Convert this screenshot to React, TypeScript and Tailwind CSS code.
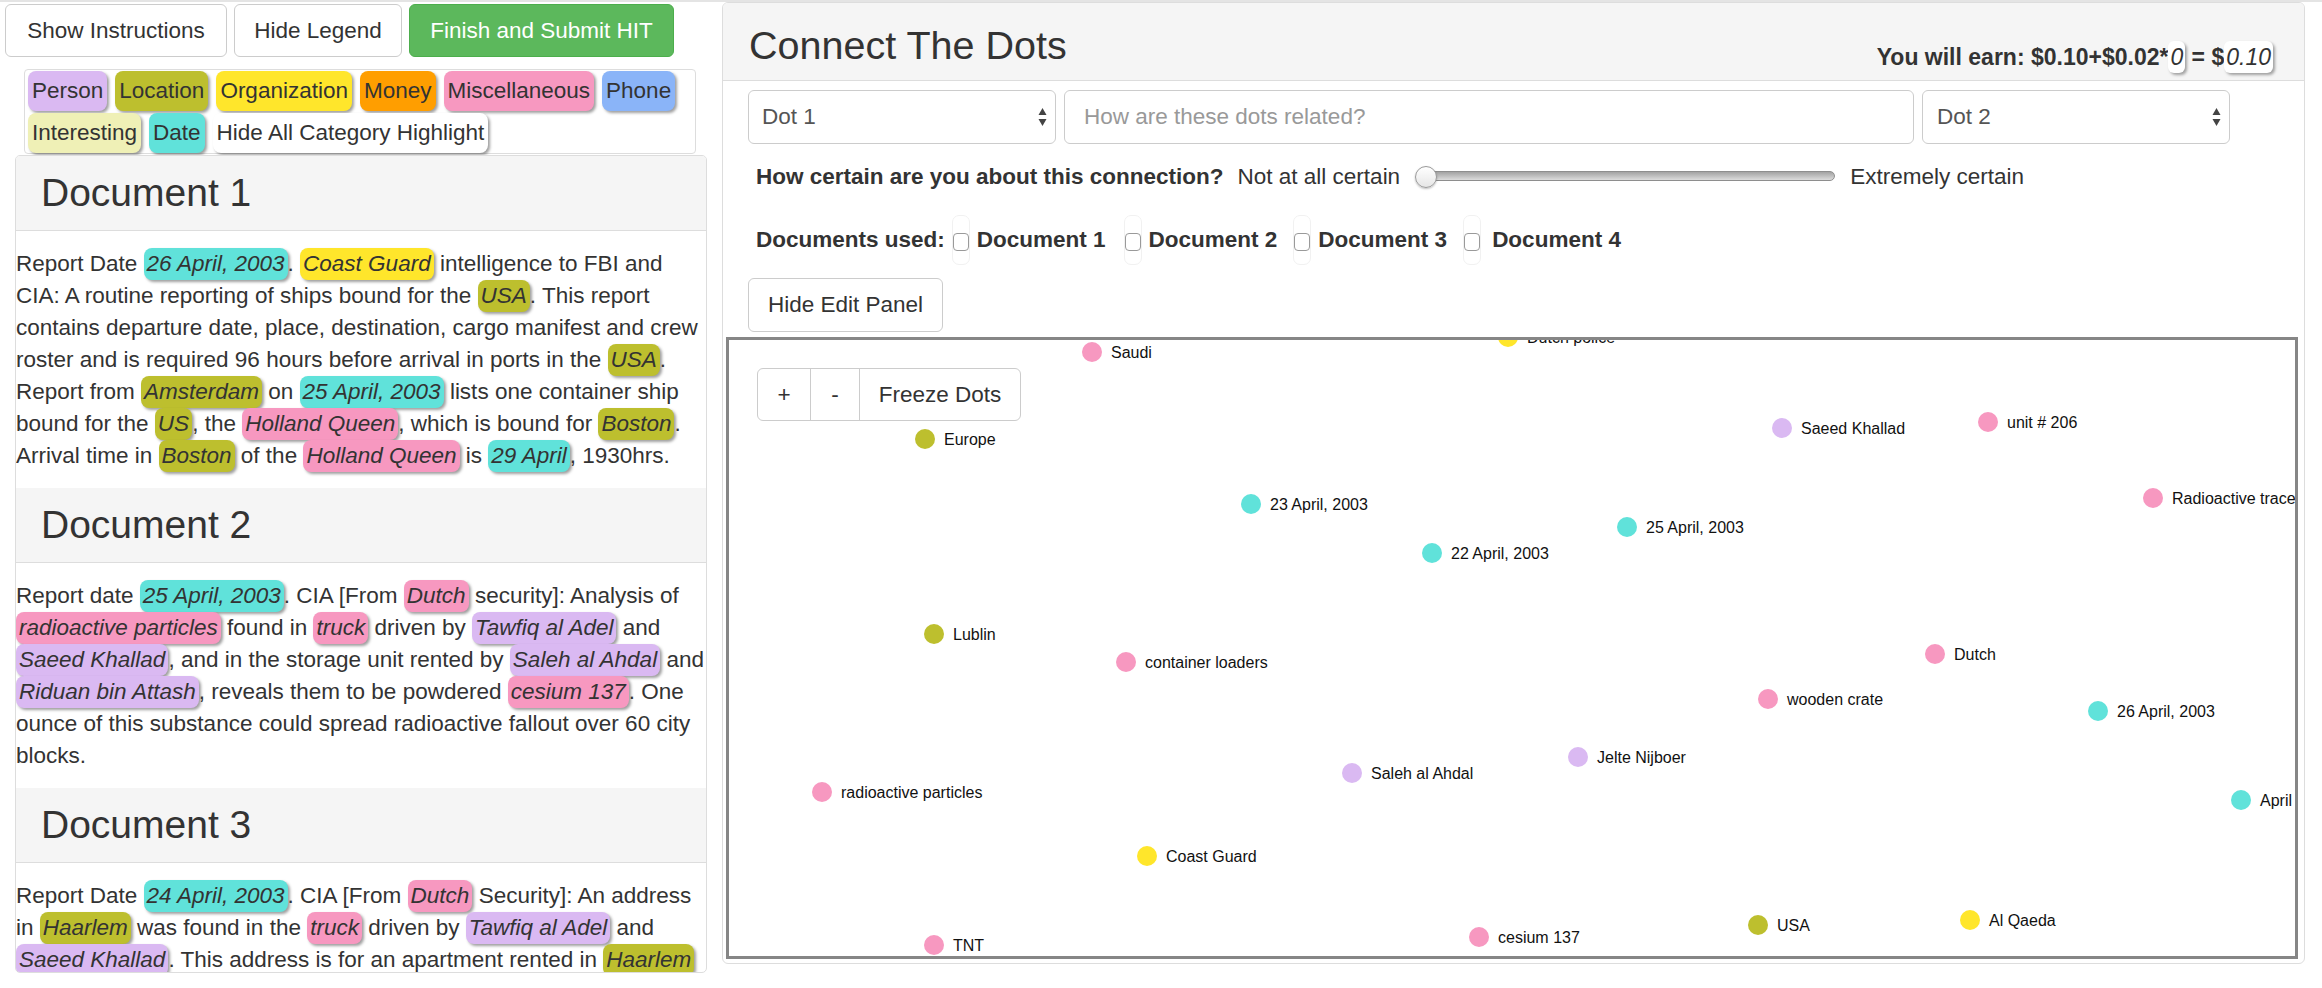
import React from "react";

const C: Record<string, string> = {
  person: "bg-[#dab9f2]",
  location: "bg-[#bdbf2e]",
  org: "bg-[#ffe62b]",
  money: "bg-[#ff9e00]",
  misc: "bg-[#f798c0]",
  phone: "bg-[#8ab4f8]",
  interesting: "bg-[#eff0b6]",
  date: "bg-[#60e2da]",
  none: "bg-white",
};

function T({ c, children }: { c: string; children: React.ReactNode }) {
  return (
    <span
      className={`inline-block h-[32px] px-[3px] rounded-[8px] italic shadow-[2px_2px_3px_rgba(0,0,0,0.38)] ${C[c]}`}
    >
      {children}
    </span>
  );
}

function LegendTag({ c, children }: { c: string; children: React.ReactNode }) {
  return (
    <span
      className={`inline-block h-[40px] leading-[40px] px-[4px] rounded-[8px] shadow-[2px_2px_3px_rgba(0,0,0,0.38)] ${C[c]}`}
    >
      {children}
    </span>
  );
}

function Doc({ title, lines }: { title: string; lines: React.ReactNode[] }) {
  return (
    <div>
      <div className="h-[75px] bg-[#f5f5f5] border-b border-[#ddd] flex items-center pl-[25px] text-[39px] leading-[44px] text-[#333]">
        {title}
      </div>
      <div className="pt-[17px] pb-[16px]">
        {lines.map((l, i) => (
          <div key={i} className="h-[32px] whitespace-nowrap">
            {l}
          </div>
        ))}
      </div>
    </div>
  );
}

function SelectArrows() {
  return (
    <svg width="9" height="20" viewBox="0 0 9 20" className="shrink-0">
      <path d="M4.5 1 L8.5 8 L0.5 8 Z" fill="#444" />
      <path d="M4.5 19 L8.5 12 L0.5 12 Z" fill="#444" />
    </svg>
  );
}

function Check() {
  return (
    <div className="flex h-[50px] w-[18px] items-start pt-[17px] justify-center rounded-[7px] border border-[#f1f1f1]">
      <div className="w-[17px] h-[18px] rounded-[4px] border border-[#9a9a9a] bg-white" />
    </div>
  );
}

const COL: Record<string, string> = {
  pink: "#f798c0",
  yellow: "#ffe62b",
  olive: "#bdbf2e",
  teal: "#60e2da",
  lav: "#dab9f2",
};

const NODES: [string, number, number, string][] = [
  ["Saudi", 1092, 352, "pink"],
  ["Dutch police", 1508, 337, "yellow"],
  ["Europe", 925, 439, "olive"],
  ["23 April, 2003", 1251, 504, "teal"],
  ["22 April, 2003", 1432, 553, "teal"],
  ["Lublin", 934, 634, "olive"],
  ["container loaders", 1126, 662, "pink"],
  ["Saeed Khallad", 1782, 428, "lav"],
  ["unit # 206", 1988, 422, "pink"],
  ["Radioactive trace", 2153, 498, "pink"],
  ["25 April, 2003", 1627, 527, "teal"],
  ["Dutch", 1935, 654, "pink"],
  ["wooden crate", 1768, 699, "pink"],
  ["26 April, 2003", 2098, 711, "teal"],
  ["Jelte Nijboer", 1578, 757, "lav"],
  ["April", 2241, 800, "teal"],
  ["radioactive particles", 822, 792, "pink"],
  ["Saleh al Ahdal", 1352, 773, "lav"],
  ["Coast Guard", 1147, 856, "yellow"],
  ["TNT", 934, 945, "pink"],
  ["cesium 137", 1479, 937, "pink"],
  ["USA", 1758, 925, "olive"],
  ["Al Qaeda", 1970, 920, "yellow"],
];

export default function App() {
  const doc1 = [
    <>Report Date <T c="date">26 April, 2003</T>. <T c="org">Coast Guard</T> intelligence to FBI and</>,
    <>CIA: A routine reporting of ships bound for the <T c="location">USA</T>. This report</>,
    <>contains departure date, place, destination, cargo manifest and crew</>,
    <>roster and is required 96 hours before arrival in ports in the <T c="location">USA</T>.</>,
    <>Report from <T c="location">Amsterdam</T> on <T c="date">25 April, 2003</T> lists one container ship</>,
    <>bound for the <T c="location">US</T>, the <T c="misc">Holland Queen</T>, which is bound for <T c="location">Boston</T>.</>,
    <>Arrival time in <T c="location">Boston</T> of the <T c="misc">Holland Queen</T> is <T c="date">29 April</T>, 1930hrs.</>,
  ];
  const doc2 = [
    <>Report date <T c="date">25 April, 2003</T>. CIA [From <T c="misc">Dutch</T> security]: Analysis of</>,
    <><T c="misc">radioactive particles</T> found in <T c="misc">truck</T> driven by <T c="person">Tawfiq al Adel</T> and</>,
    <><T c="person">Saeed Khallad</T>, and in the storage unit rented by <T c="person">Saleh al Ahdal</T> and</>,
    <><T c="person">Riduan bin Attash</T>, reveals them to be powdered <T c="misc">cesium 137</T>. One</>,
    <>ounce of this substance could spread radioactive fallout over 60 city</>,
    <>blocks.</>,
  ];
  const doc3 = [
    <>Report Date <T c="date">24 April, 2003</T>. CIA [From <T c="misc">Dutch</T> Security]: An address</>,
    <>in <T c="location">Haarlem</T> was found in the <T c="misc">truck</T> driven by <T c="person">Tawfiq al Adel</T> and</>,
    <><T c="person">Saeed Khallad</T>. This address is for an apartment rented in <T c="location">Haarlem</T></>,
  ];

  return (
    <div className="w-[2322px] h-[988px] overflow-hidden bg-white border-t-2 border-[#e4e4e4] text-[#333] text-[22.5px] leading-[32px] font-['Liberation_Sans',Arial,sans-serif] flex items-start">
      {/* LEFT COLUMN */}
      <div className="w-[722px] shrink-0 flex flex-col">
        <div className="ml-[5px] mt-[2px] flex gap-[7px]">
          <button className="w-[222px] h-[53px] rounded-[6px] border border-[#ccc] bg-white text-[#333]">
            Show Instructions
          </button>
          <button className="w-[168px] h-[53px] rounded-[6px] border border-[#ccc] bg-white text-[#333]">
            Hide Legend
          </button>
          <button className="w-[265px] h-[53px] rounded-[6px] border border-[#4cae4c] bg-[#5cb85c] text-white">
            Finish and Submit HIT
          </button>
        </div>

        <div className="ml-[24px] mt-[12px] w-[672px] h-[85px] border border-[#ddd] rounded-[4px] px-[3px] pt-[1px] flex flex-wrap content-start gap-x-[8px] gap-y-[2px]">
          <LegendTag c="person">Person</LegendTag>
          <LegendTag c="location">Location</LegendTag>
          <LegendTag c="org">Organization</LegendTag>
          <LegendTag c="money">Money</LegendTag>
          <LegendTag c="misc">Miscellaneous</LegendTag>
          <LegendTag c="phone">Phone</LegendTag>
          <LegendTag c="interesting">Interesting</LegendTag>
          <LegendTag c="date">Date</LegendTag>
          <LegendTag c="none">Hide All Category Highlight</LegendTag>
        </div>

        <div className="ml-[15px] mt-[1px] w-[692px] h-[818px] border border-[#ddd] rounded-[5px] overflow-hidden">
          <Doc title="Document 1" lines={doc1} />
          <Doc title="Document 2" lines={doc2} />
          <Doc title="Document 3" lines={doc3} />
        </div>
      </div>

      {/* RIGHT PANEL */}
      <div className="w-[1583px] h-[962px] shrink-0 border border-[#ddd] rounded-[6px] flex flex-col overflow-hidden">
        <div className="h-[78px] shrink-0 bg-[#f5f5f5] border-b border-[#ddd] flex justify-between pl-[26px] pr-[31px]">
          <div className="self-center pt-[6px] text-[39.5px] leading-[44px] text-[#333]">Connect The Dots</div>
          <div className="self-end mb-[7px] font-bold text-[23px] leading-[32px] text-[#333] whitespace-nowrap">
            You will earn: $0.10+$0.02*
            <span className="inline-block px-[2px] rounded-[6px] bg-white italic font-normal shadow-[2px_2px_3px_rgba(0,0,0,0.35)]">0</span>
            {" "}= $
            <span className="inline-block px-[2px] rounded-[6px] bg-white italic font-normal shadow-[2px_2px_3px_rgba(0,0,0,0.35)]">0.10</span>
          </div>
        </div>

        <div className="flex flex-col">
          <div className="mt-[9px] ml-[25px] flex gap-[8px]">
            <div className="w-[308px] h-[54px] rounded-[6px] border border-[#ccc] bg-white flex items-center justify-between pl-[13px] pr-[8px] text-[#555]">
              <span>Dot 1</span>
              <SelectArrows />
            </div>
            <div className="w-[850px] h-[54px] rounded-[6px] border border-[#ccc] bg-white flex items-center pl-[19px] text-[#999]">
              How are these dots related?
            </div>
            <div className="w-[308px] h-[54px] rounded-[6px] border border-[#ccc] bg-white flex items-center justify-between pl-[14px] pr-[8px] text-[#555]">
              <span>Dot 2</span>
              <SelectArrows />
            </div>
          </div>

          <div className="mt-[17px] ml-[33px] h-[32px] flex items-center whitespace-nowrap">
            <span className="font-bold">How certain are you about this connection?</span>
            <span className="ml-[14px]">Not at all certain</span>
            <div className="ml-[15px] relative w-[420px] h-[24px]">
              <div className="absolute left-[14px] right-0 top-[6px] h-[10px] rounded-full border border-[#8e8e8e] bg-gradient-to-b from-[#a3a3a3] to-[#dcdcdc]" />
              <div className="absolute left-0 top-[1px] w-[22px] h-[22px] rounded-full border border-[#9a9a9a] bg-gradient-to-b from-white to-[#e6e6e6] shadow-[0_1px_2px_rgba(0,0,0,0.25)]" />
            </div>
            <span className="ml-[15px]">Extremely certain</span>
          </div>

          <div className="mt-[22px] ml-[33px] h-[50px] flex items-center whitespace-nowrap font-bold">
            <span>Documents used:</span>
            <div className="ml-[7px]"><Check /></div>
            <span className="ml-[7px]">Document 1</span>
            <div className="ml-[18px]"><Check /></div>
            <span className="ml-[7px]">Document 2</span>
            <div className="ml-[16px]"><Check /></div>
            <span className="ml-[7px]">Document 3</span>
            <div className="ml-[16px]"><Check /></div>
            <span className="ml-[11px]">Document 4</span>
          </div>

          <div className="mt-[13px] ml-[25px]">
            <button className="w-[195px] h-[54px] rounded-[6px] border border-[#ccc] bg-white text-[#333]">
              Hide Edit Panel
            </button>
          </div>

          <div className="mt-[5px] ml-[3px] w-[1572px] h-[622px] border-[3px] border-[#868686] relative overflow-hidden bg-white">
            <svg width="1566" height="616" className="block">
              {NODES.map(([label, x, y, c]) => {
                const cx = x - 729;
                const cy = y - 340;
                return (
                  <g key={label}>
                    <circle cx={cx} cy={cy} r={10} fill={COL[c]} />
                    <text x={cx + 19} y={cy} dominantBaseline="central" fontSize={16} fill="#111">
                      {label}
                    </text>
                  </g>
                );
              })}
            </svg>
            <div className="absolute left-[28px] top-[28px] h-[53px] flex rounded-[6px] border border-[#ccc] bg-white text-[#333]">
              <div className="w-[53px] flex items-center justify-center border-r border-[#ccc]">+</div>
              <div className="w-[49px] flex items-center justify-center border-r border-[#ccc]">-</div>
              <div className="w-[160px] flex items-center justify-center">Freeze Dots</div>
            </div>
          </div>
        </div>
      </div>
    </div>
  );
}
